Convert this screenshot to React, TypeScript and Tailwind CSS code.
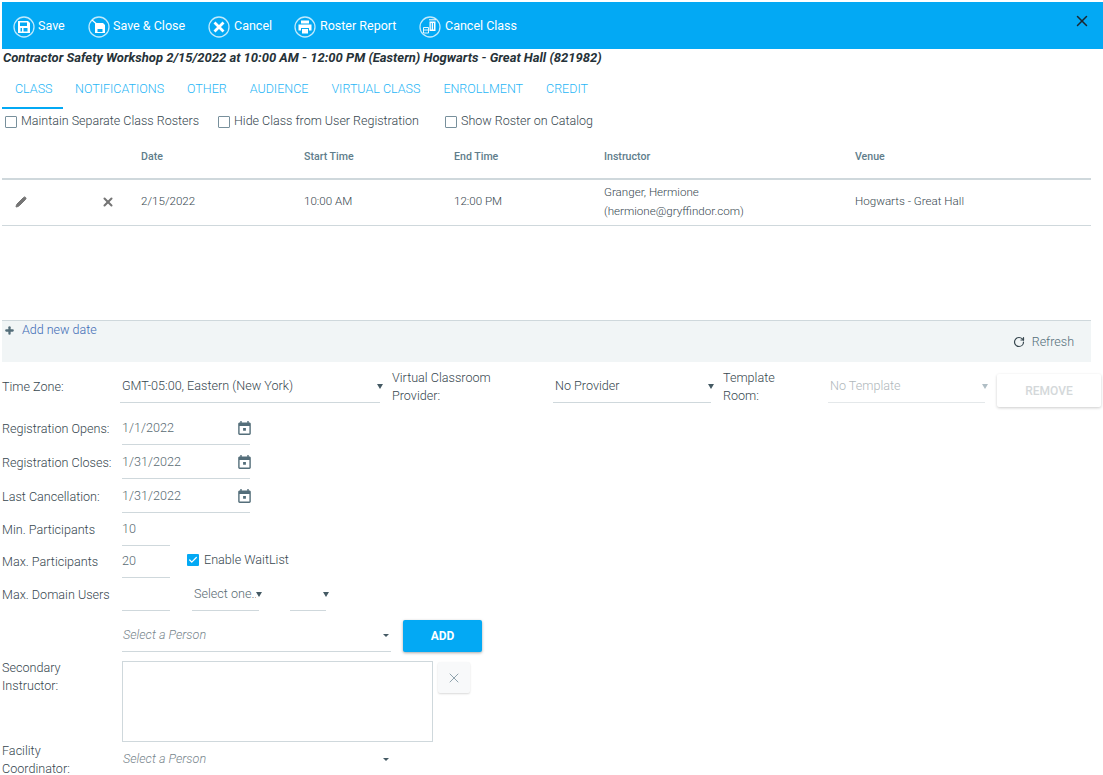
import type { ReactNode } from "react";
import { Check, Pencil, Plus, RotateCw, X } from "lucide-react";

const tabs = ["Class", "Notifications", "Other", "Audience", "Virtual Class", "Enrollment", "Credit"];

function Ring({ children }: { children: ReactNode }) {
  return (
    <svg viewBox="0 0 22 22" className="w-[22px] h-[22px] shrink-0" fill="none">
      <circle cx="11" cy="11" r="10" stroke="#fff" strokeOpacity="0.75" strokeWidth="1.3" />
      {children}
    </svg>
  );
}

function ToolButton({ label, icon, className }: { label: string; icon: ReactNode; className: string }) {
  return (
    <div className={`flex items-center ${className}`}>
      <Ring>{icon}</Ring>
      <span>{label}</span>
    </div>
  );
}

const floppy = (
  <path
    fill="#fff"
    fillRule="evenodd"
    d="M5 5h10l2 2v10H5zM7 6.5v3.5h7V6.5zM7.5 12v3.5h1.5V12zM10.5 12v3.5h4V12z"
  />
);

function Toolbar() {
  return (
    <div className="h-[47px] bg-[#03a9f4] flex items-center pl-[11px] pt-[2px] text-[12.5px] text-white relative shrink-0">
      <ToolButton label="Save" icon={floppy} className="w-[75px] gap-[3px]" />
      <ToolButton
        label="Save & Close"
        icon={
          <>
            <path fill="#fff" fillRule="evenodd" d="M7 7h8l2 2v8H7zM9.5 13v3h5v-3z" />
            <path d="M4 4l7 6" stroke="#fff" strokeWidth="1.2" />
          </>
        }
        className="w-[120px] gap-[3px]"
      />
      <ToolButton
        label="Cancel"
        icon={<path d="M6.5 6.5l9 9M15.5 6.5l-9 9" stroke="#fff" strokeWidth="2.8" />}
        className="w-[86px] gap-[4px]"
      />
      <ToolButton
        label="Roster Report"
        icon={
          <path
            fill="#fff"
            fillRule="evenodd"
            d="M7 4.5h8v3H7zM4.5 8.5h13v6h-2.5v-2.5H7v2.5H4.5zM8 13h6v4.5H8z"
          />
        }
        className="w-[125px] gap-[4px]"
      />
      <ToolButton
        label="Cancel Class"
        icon={
          <>
            <path fill="#fff" fillRule="evenodd" d="M10.5 5.5h6v9.5h-6zM11.8 7v6.5h.9V7zM14 7v6.5h.9V7z" />
            <path d="M10 3.8h7" stroke="#fff" strokeWidth="1" />
            <path d="M4.5 11.5h5v5.5h-5zM5 14h4" stroke="#fff" strokeWidth="0.9" />
          </>
        }
        className="w-[120px] gap-[4px]"
      />
      <X className="absolute right-[12px] top-[10px] w-[18px] h-[18px] text-[#1c2730]" strokeWidth={2} />
    </div>
  );
}

function Tabs() {
  return (
    <div className="flex h-[42px] text-[12.5px] font-light uppercase text-[#29b6f6] shrink-0">
      {tabs.map((t, i) => (
        <div
          key={t}
          className={`h-full pt-[13px] ${
            i === 0 ? "w-[61px] pl-[13px] border-b-2 border-[#03a9f4]" : "pl-[12px] pr-[11px]"
          }`}
        >
          {t}
        </div>
      ))}
    </div>
  );
}

function Box({ label, className }: { label: string; className: string }) {
  return (
    <label className={`flex items-center gap-[4px] ${className}`}>
      <span className="w-[12px] h-[12px] border border-[#78909c] rounded-[1px] shrink-0" />
      {label}
    </label>
  );
}

function Caret({ className = "", light = false }: { className?: string; light?: boolean }) {
  return (
    <span
      className={`w-0 h-0 border-x-[3.5px] border-x-transparent border-t-[5px] ${
        light ? "border-t-[#b0bec5]" : "border-t-[#455a64]"
      } ${className}`}
    />
  );
}

function Select({
  value,
  className,
  light,
}: {
  value: string;
  className: string;
  light?: boolean;
}) {
  return (
    <div
      className={`flex items-center justify-between h-[32px] border-b border-[#cfd8dc] pl-[2px] shrink-0 ${className} ${
        light ? "text-[#b0b7bb] border-[#e4e8ea]" : ""
      }`}
    >
      <span className="whitespace-nowrap overflow-hidden">{value}</span>
      <Caret light={light} className="-mr-[3px] shrink-0" />
    </div>
  );
}

function PersonSelect({ className }: { className: string }) {
  return (
    <div
      className={`flex items-center justify-between border-b border-[#cfd8dc] pl-[1px] pr-[1px] italic text-[#78868d] w-[269px] shrink-0 ${className}`}
    >
      Select a Person
      <span className="w-0 h-0 mr-[1px] border-x-[3px] border-x-transparent border-t-[3px] border-t-[#455a64]" />
    </div>
  );
}

function Row({
  label,
  className,
  labelClass = "",
  children,
}: {
  label: string;
  className: string;
  labelClass?: string;
  children?: ReactNode;
}) {
  return (
    <div className={`flex shrink-0 ${className}`}>
      <div className={`w-[110px] mr-[10px] shrink-0 leading-[18px] self-center ${labelClass}`}>{label}</div>
      {children}
    </div>
  );
}

function DateField({ value }: { value: string }) {
  return (
    <div className="w-[128px] h-full pt-[2px] border-b border-[#cfd8dc] flex items-center justify-between text-[#5a6b73]">
      {value}
      <svg viewBox="3 2 18 20" className="w-[13px] h-[14px] -mr-[1px] mb-[1px]" fill="#546e7a">
        <path d="M19 4h-1V2h-2v2H8V2H6v2H5c-1.1 0-2 .9-2 2v14c0 1.1.9 2 2 2h14c1.1 0 2-.9 2-2V6c0-1.1-.9-2-2-2zm0 16H5V9h14v11zM10 12h4v4h-4z" />
      </svg>
    </div>
  );
}

function NumberField({ value }: { value?: string }) {
  return <div className="w-[48px] h-full border-b border-[#cfd8dc] flex items-center text-[#5a6b73]">{value}</div>;
}

function Schedule() {
  return (
    <div className="w-[1089px] shrink-0 text-[11.6px] font-light text-[#37474f]">
      <div className="flex items-center h-[46px] pt-[1px] border-b-2 border-[#cfd8dc] font-medium text-[10.6px] text-[#607d8b]">
        <span className="ml-[139px] w-[163px]">Date</span>
        <span className="w-[150px]">Start Time</span>
        <span className="w-[150px]">End Time</span>
        <span className="w-[251px]">Instructor</span>
        <span>Venue</span>
      </div>
      <div className="flex items-center h-[46px] pb-[2px] border-b border-[#cfd8dc]">
        <Pencil className="ml-[13px] w-[12px] h-[12px] text-[#757575] fill-[#757575]" />
        <X className="ml-[74px] w-[14px] h-[14px] text-[#757575]" strokeWidth={3.5} />
        <span className="ml-[26px] w-[163px]">2/15/2022</span>
        <span className="w-[150px]">10:00 AM</span>
        <span className="w-[150px]">12:00 PM</span>
        <span className="w-[251px] leading-[19px]">
          Granger, Hermione
          <br />
          (hermione@gryffindor.com)
        </span>
        <span>Hogwarts - Great Hall</span>
      </div>
      <div className="h-[94px]" />
      <div className="h-[42px] bg-[#f1f5f6] border-t border-[#cfd8dc] flex justify-between pl-[2px] pr-[17px] text-[12.5px]">
        <div className="flex items-center gap-[7px] h-[19px] text-[#3f6cb5]">
          <Plus className="w-[11px] h-[11px] text-[#546e7a]" strokeWidth={5} />
          Add new date
        </div>
        <div className="flex items-center gap-[7px] mt-[1px] text-[#546e7a]">
          <RotateCw className="w-[12px] h-[12px] text-[#37474f]" strokeWidth={2.4} />
          Refresh
        </div>
      </div>
    </div>
  );
}

function SettingsForm() {
  return (
    <div className="flex flex-col text-[12.6px] font-light text-[#37474f]">
      <div className="flex h-[33px] mt-[9px] shrink-0">
        <div className="w-[118px] self-center">Time Zone:</div>
        <Select value="GMT-05:00, Eastern (New York)" className="w-[260px]" />
        <div className="w-[161px] ml-[12px] leading-[18px] -mt-[2px]">
          Virtual Classroom
          <br />
          Provider:
        </div>
        <Select value="No Provider" className="w-[158px]" />
        <div className="w-[105px] ml-[12px] leading-[18px] -mt-[2px]">
          Template
          <br />
          Room:
        </div>
        <Select value="No Template" className="w-[157px]" light />
        <div className="ml-[12px] w-[104px] h-[33px] mt-[3px] bg-white shadow-[0_1px_3px_rgba(0,0,0,0.2)] rounded-[2px] flex items-center justify-center font-medium text-[12px] text-[#d4d8da]">
          REMOVE
        </div>
      </div>
      <div className="flex flex-col">
        <Row label="Registration Opens:" className="h-[34px] mt-[7px]" labelClass="pt-[2px]">
          <DateField value="1/1/2022" />
        </Row>
        <Row label="Registration Closes:" className="h-[34px]" labelClass="pt-[1px]">
          <DateField value="1/31/2022" />
        </Row>
        <Row label="Last Cancellation:" className="h-[34px]" labelClass="pt-[2px]">
          <DateField value="1/31/2022" />
        </Row>
        <Row label="Min. Participants" className="h-[33px]">
          <NumberField value="10" />
        </Row>
        <Row label="Max. Participants" className="h-[32px]">
          <NumberField value="20" />
          <div className="ml-[17px] flex items-center gap-[5px] h-[28px]">
            <span className="w-[12px] h-[12px] rounded-[1px] bg-[#03a9f4] flex items-center justify-center">
              <Check className="w-[10px] h-[10px] text-white" strokeWidth={3} />
            </span>
            Enable WaitList
          </div>
        </Row>
        <Row label="Max. Domain Users" className="h-[33px]">
          <NumberField />
          <Select value="Select one.." className="w-[67px] ml-[22px] h-[33px] text-[#5a6b73]" />
          <Select value="" className="w-[36px] ml-[31px] h-[33px]" />
        </Row>
        <div className="flex h-[41px] ml-[120px] shrink-0">
          <PersonSelect className="h-[41px] pt-[9px]" />
          <div className="ml-[12px] mt-[9px] w-[79px] h-[32px] bg-[#03a9f4] rounded-[2px] shadow-[0_1px_3px_rgba(0,0,0,0.35)] flex items-center justify-center text-[12px] text-white font-bold">
            ADD
          </div>
        </div>
        <div className="flex mt-[9px] h-[81px] shrink-0">
          <div className="w-[120px] leading-[18px] -mt-[2px]">
            Secondary
            <br />
            Instructor:
          </div>
          <div className="w-[311px] h-[81px] border border-[#cfd8dc]" />
          <div className="ml-[5px] mt-[1px] w-[32px] h-[31px] bg-[#f8f9fa] rounded-[2px] shadow-[0_1px_2px_rgba(0,0,0,0.15)] flex items-center justify-center">
            <X className="w-[16px] h-[16px] text-[#90a4ae]" strokeWidth={1.5} />
          </div>
        </div>
        <div className="flex h-[35px] shrink-0">
          <div className="w-[120px] leading-[18px]">
            Facility
            <br />
            Coordinator:
          </div>
          <PersonSelect className="h-[35px]" />
        </div>
      </div>
    </div>
  );
}

export default function App() {
  return (
    <div
      className="w-[1103px] h-[775px] overflow-hidden bg-white pl-[2px] pt-[2px] flex flex-col"
      style={{ fontFamily: "Roboto, sans-serif" }}
    >
      <Toolbar />
      <div className="h-[18px] flex items-center text-[13px] font-bold italic text-[#263238] pl-[1px] shrink-0">
        Contractor Safety Workshop 2/15/2022 at 10:00 AM - 12:00 PM (Eastern) Hogwarts - Great Hall (821982)
      </div>
      <Tabs />
      <div className="flex items-center h-[25px] text-[12.5px] font-light text-[#37474f] pl-[3px] shrink-0">
        <Box label="Maintain Separate Class Rosters" className="w-[213px]" />
        <Box label="Hide Class from User Registration" className="w-[227px]" />
        <Box label="Show Roster on Catalog" className="" />
      </div>
      <Schedule />
      <SettingsForm />
    </div>
  );
}
